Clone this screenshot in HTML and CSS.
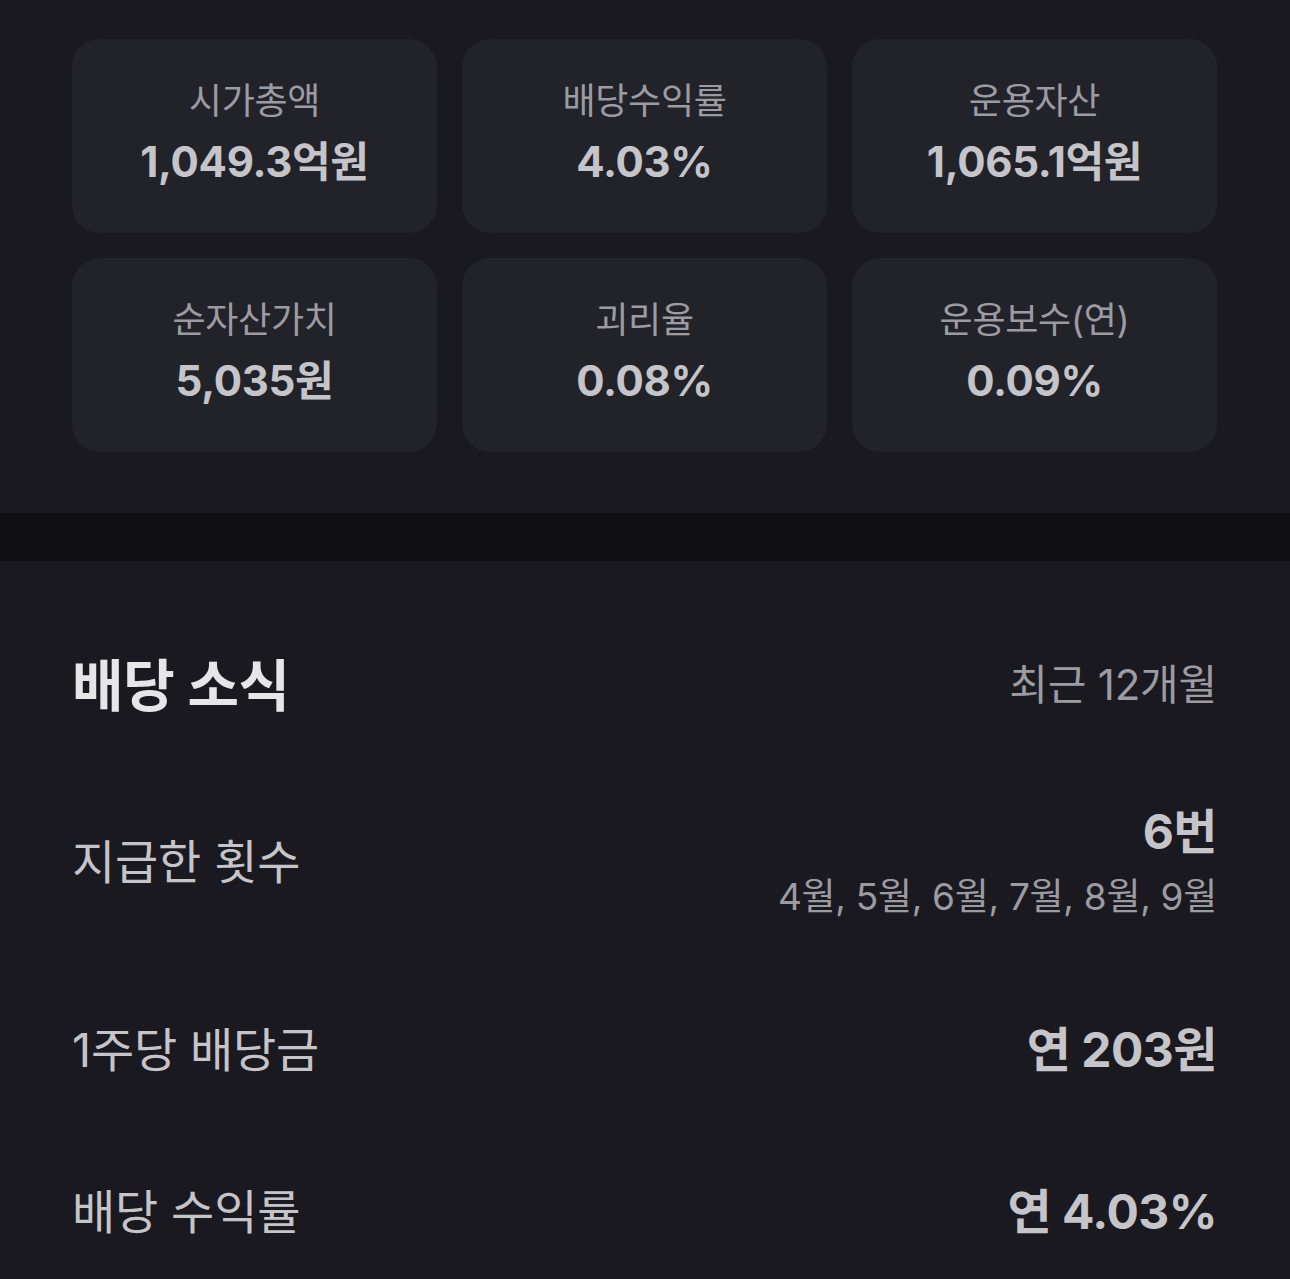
FILE: index.html
```html
<!DOCTYPE html>
<html lang="ko">
<head>
<meta charset="utf-8">
<link rel="stylesheet" href="styles.css">
</head>
<body>
<section class="stats">
  <div class="grid">
    <div class="card"><div class="label">시가총액</div><div class="value">1,049.3억원</div></div>
    <div class="card"><div class="label">배당수익률</div><div class="value">4.03%</div></div>
    <div class="card"><div class="label">운용자산</div><div class="value">1,065.1억원</div></div>
    <div class="card"><div class="label">순자산가치</div><div class="value">5,035원</div></div>
    <div class="card"><div class="label">괴리율</div><div class="value">0.08%</div></div>
    <div class="card"><div class="label">운용보수(연)</div><div class="value">0.09%</div></div>
  </div>
</section>
<div class="divider"></div>
<section class="dividend">
  <div class="head">
    <h2 class="title">배당 소식</h2>
    <span class="period">최근 12개월</span>
  </div>
  <div class="rows">
    <div class="row">
      <div class="row-label">지급한 횟수</div>
      <div class="row-right">
        <div class="row-value">6번</div>
        <div class="row-sub">4월, 5월, 6월, 7월, 8월, 9월</div>
      </div>
    </div>
    <div class="row">
      <div class="row-label">1주당 배당금</div>
      <div class="row-right"><div class="row-value">연 203원</div></div>
    </div>
    <div class="row row-last">
      <div class="row-label">배당 수익률</div>
      <div class="row-right"><div class="row-value">연 4.03%</div></div>
    </div>
  </div>
</section>
</body>
</html>
```
FILE: styles.css
```css
* { box-sizing: border-box; margin: 0; padding: 0; }
html, body { background: #1a191f; }
body {
  font-family: Inter, "Noto Sans CJK KR", sans-serif;
  color: #c4c4c9;
  width: 1290px;
  overflow: hidden;
}
.stats { padding: 39px 73px 61px 72px; }
.grid {
  display: grid;
  grid-template-columns: repeat(3, 1fr);
  gap: 25px;
}
.card {
  background: #222229;
  border-radius: 28px;
  height: 194px;
  display: flex;
  flex-direction: column;
  align-items: center;
  justify-content: center;
  gap: 14px;
  padding-bottom: 4px;
}
.label { font-size: 36px; line-height: 42px; color: #9b9ba1; letter-spacing: -0.3px; }
.value { font-size: 42px; line-height: 52px; font-weight: 700; color: #c4c4c9; letter-spacing: -0.3px; }
.divider { height: 48px; background: #101012; }
.dividend { padding: 88px 73px 0 72px; }
.head { display: flex; justify-content: space-between; align-items: center; height: 64px; }
.title { font-size: 56px; font-weight: 700; color: #e6e6e9; letter-spacing: -0.3px; }
.period { font-size: 42px; color: #9b9ba1; letter-spacing: -0.2px; }
.rows { display: flex; flex-direction: column; margin-top: 91px; }
.row { display: flex; justify-content: space-between; align-items: center; margin-top: 103px; }
.row:first-child { margin-top: 0; }
.row-last { margin-top: 106px; }
.row-label { font-size: 47px; line-height: 56px; color: #c4c4c9; letter-spacing: -0.2px; }
.row-right { display: flex; flex-direction: column; align-items: flex-end; gap: 15px; }
.row-value { font-size: 48px; line-height: 56px; font-weight: 700; color: #c4c4c9; letter-spacing: -0.5px; }
.row-sub { font-size: 37px; line-height: 44px; color: #9b9ba1; letter-spacing: -0.3px; }
```
